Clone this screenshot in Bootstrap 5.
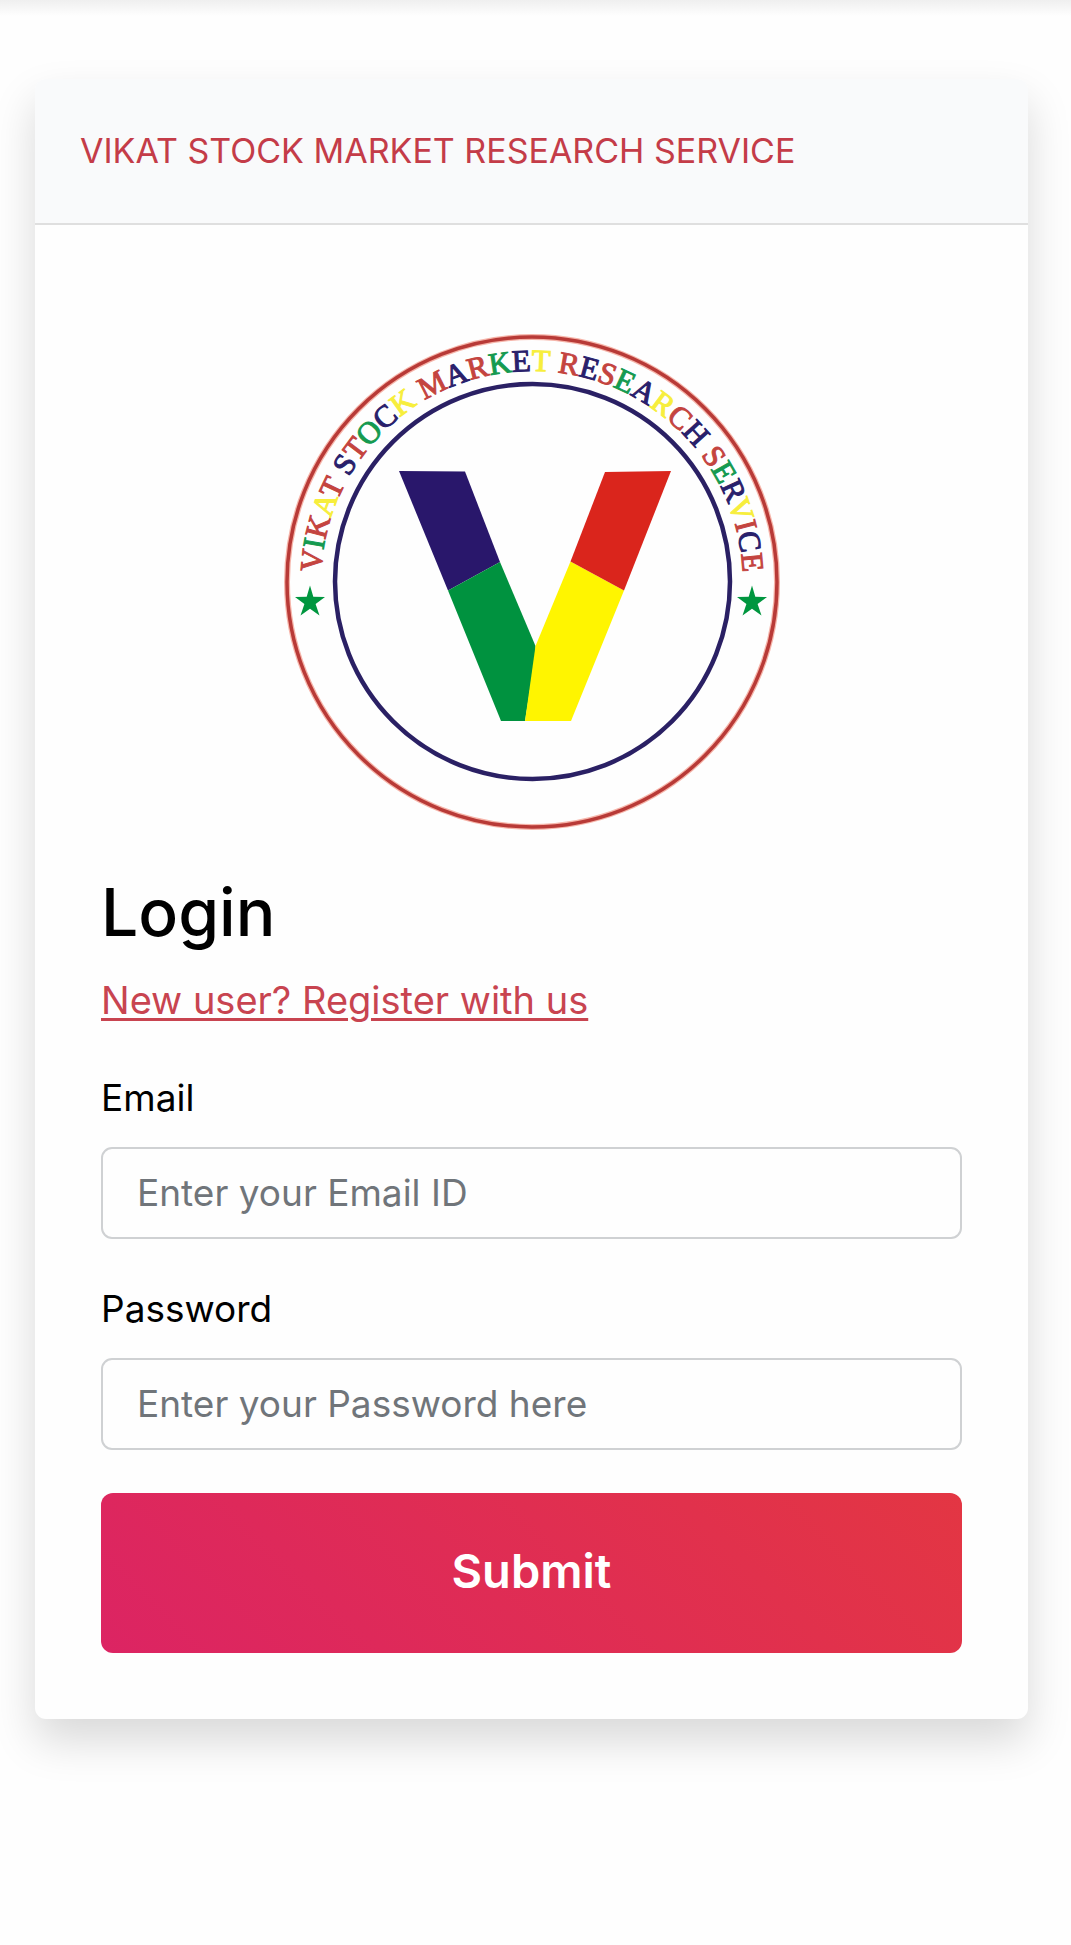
<!DOCTYPE html>
<html lang="en">
<head>
<meta charset="utf-8">
<meta name="viewport" content="width=device-width, initial-scale=1">
<title>Login - Vikat Stock Market Research Service</title>
<link href="https://cdn.jsdelivr.net/npm/bootstrap@5.3.0/dist/css/bootstrap.min.css" rel="stylesheet">
<style>
  body { background: #fefefe; color: #000; font-family: Inter, "Open Sans", sans-serif; font-size: 37px; line-height: 54px; }
  .top-shade { height: 16px; background: linear-gradient(#efefef, #fefefe); }
  .page-main { padding: 63px 43px 64px 35px; }
  .login-card { border: 0; border-radius: 11px; background: #fefefe; box-shadow: 0 22px 44px rgba(0, 0, 0, .15); }
  .login-card .card-header { padding: 45px; background: #f9fafb; border-bottom: 2px solid #dfdfdf; border-radius: 11px 11px 0 0; color: #c43c48; font-size: 34px; }
  .login-card .card-body { padding: 66px; }
  .brand-logo { width: 100%; max-width: 496px; margin: 43px 0 42px; }
  .ring-text { font-family: "Liberation Serif", serif; font-size: 31px; fill: #c4443f; stroke: #c4443f; stroke-width: 1px; }
  .ink-green { fill: #159a50; stroke: #159a50; }
  .ink-navy { fill: #29206b; stroke: #29206b; }
  .ink-yellow { fill: #f7ee3c; stroke: #f7ee3c; }
  .login-title { font-size: 66px; line-height: 80px; font-weight: 500; margin-bottom: 21px; }
  .register-link { color: #c84450; font-size: 38px; text-decoration-thickness: 3px; text-underline-offset: 4px; }
  .login-card .form-label { margin-bottom: 22px; }
  .login-card .form-control { height: 92px; padding: 0 34px 2px; border: 2px solid #cfd1d3; border-radius: 11px; background: #fefefe; font-size: 37px; }
  .login-card .form-control::placeholder { color: #70757a; }
  .field-group { margin-bottom: 43px; }
  .submit-btn { height: 160px; padding-bottom: 10px; border: 0; border-radius: 12px; background: linear-gradient(45deg, #dc2463, #e33643); color: #fff; font-size: 47px; font-weight: 600; }
  .submit-btn:hover { color: #fff; }
</style>
</head>
<body>
<div class="top-shade"></div>
<main class="container-fluid page-main">
  <div class="card login-card">
    <div class="card-header">VIKAT STOCK MARKET RESEARCH SERVICE</div>
    <div class="card-body">
      <div class="text-center">
        <svg class="brand-logo d-inline-block align-top" viewBox="284 334 496 496" role="img" aria-label="Vikat Stock Market Research Service">
          <circle cx="532" cy="582" r="245" fill="none" stroke="#f6b5aa" stroke-width="6"/>
          <circle cx="532" cy="582" r="245" fill="none" stroke="#b83a37" stroke-width="3.500"/>
          <circle cx="532.5" cy="581.5" r="197.5" fill="none" stroke="#2a2064" stroke-width="4.5"/>
          <path d="M399 471L465 471.500L500 562L448 590.500Z" fill="#29176b"/>
          <path d="M448 590.500L500 562L535.500 646V655L525 721H501Z" fill="#00923f"/>
          <path d="M570.500 561.500L624 590.500L571 721H525L535.500 646Z" fill="#fff500"/>
          <path d="M605 472L671 471L624 590.500L570.500 561.500Z" fill="#da251c"/>
          <path id="star" fill="#00963f" d="M310 585.500L313.300 596.800L325 597L315.600 604L319.500 615.500L310 608.700L300.500 615.500L304.400 604L295 597L306.700 596.800Z"/>
          <use href="#star" x="442"/>
          <path id="ring" d="M321 582A211 211 0 0 1 743 582" fill="none"/>
          <text class="ring-text" text-anchor="middle"><textPath href="#ring" startOffset="50%">V<tspan class="ink-green">I</tspan>K<tspan class="ink-yellow">A</tspan>T <tspan class="ink-navy">S</tspan>T<tspan class="ink-green">O</tspan><tspan class="ink-navy">C</tspan><tspan class="ink-yellow">K</tspan> M<tspan class="ink-navy">A</tspan>R<tspan class="ink-green">K</tspan><tspan class="ink-navy">E</tspan><tspan class="ink-yellow">T</tspan> R<tspan class="ink-navy">E</tspan>S<tspan class="ink-green">E</tspan><tspan class="ink-navy">A</tspan><tspan class="ink-yellow">R</tspan>C<tspan class="ink-navy">H</tspan> S<tspan class="ink-green">E</tspan><tspan class="ink-navy">R</tspan><tspan class="ink-yellow">V</tspan>I<tspan class="ink-navy">C</tspan>E</textPath></text>
        </svg>
      </div>
      <h1 class="login-title">Login</h1>
      <p class="field-group"><a class="register-link" href="#register">New user? Register with us</a></p>
      <form>
        <div class="field-group">
          <label class="form-label d-block" for="email">Email</label>
          <input class="form-control" type="email" id="email" placeholder="Enter your Email ID">
        </div>
        <div class="field-group">
          <label class="form-label d-block" for="password">Password</label>
          <input class="form-control" type="password" id="password" placeholder="Enter your Password here">
        </div>
        <button class="btn submit-btn w-100" type="submit">Submit</button>
      </form>
    </div>
  </div>
</main>
<script src="https://cdn.jsdelivr.net/npm/bootstrap@5.3.0/dist/js/bootstrap.bundle.min.js"></script>
</body>
</html>
